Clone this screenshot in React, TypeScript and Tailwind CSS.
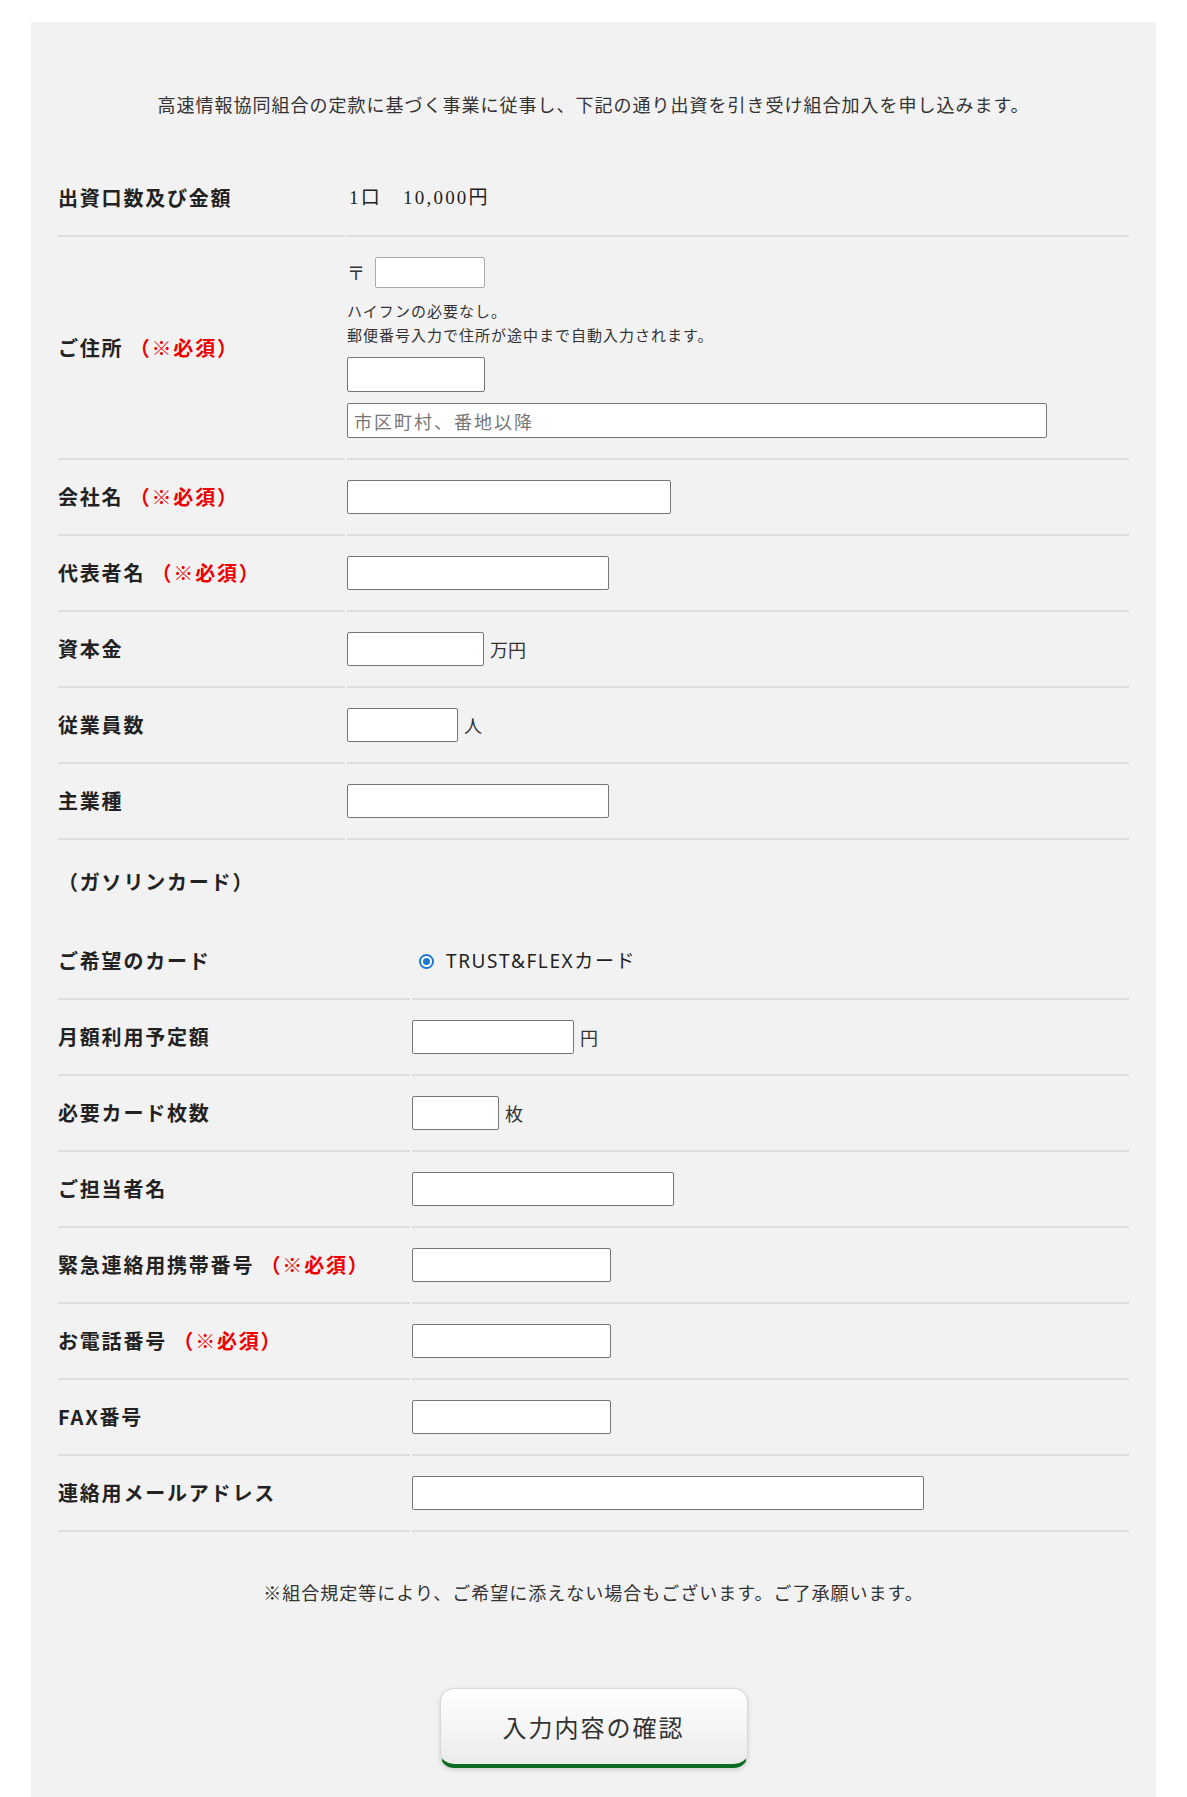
import React from "react";

type Row = {
  label: string;
  required?: boolean;
  width?: number;
  unit?: string;
};

const firstRows: Row[] = [
  { label: "会社名", required: true, width: 324 },
  { label: "代表者名", required: true, width: 262 },
  { label: "資本金", width: 137, unit: "万円" },
  { label: "従業員数", width: 111, unit: "人" },
  { label: "主業種", width: 262 },
];

const secondRows: Row[] = [
  { label: "月額利用予定額", width: 162, unit: "円" },
  { label: "必要カード枚数", width: 87, unit: "枚" },
  { label: "ご担当者名", width: 262 },
  { label: "緊急連絡用携帯番号", required: true, width: 199 },
  { label: "お電話番号", required: true, width: 199 },
  { label: "FAX番号", width: 199 },
  { label: "連絡用メールアドレス", width: 512 },
];

function Label({ label, required }: { label: string; required?: boolean }) {
  return (
    <span className="text-[20px] font-bold leading-[34px] tracking-[1.8px] text-[#222]">
      {label}
      {required && <span className="text-[#ee0000]"> （※必須）</span>}
    </span>
  );
}

function TextInput({ width, light, placeholder }: { width: number; light?: boolean; placeholder?: string }) {
  return (
    <input
      type="text"
      placeholder={placeholder}
      style={{ width }}
      className={
        "h-[34px] rounded-[2px] border bg-white px-[6px] text-[18px] tracking-[1.8px] text-[#333] outline-none placeholder:text-[#777] " +
        (light ? "border-[#aaaaaa]" : "border-[#767676]")
      }
    />
  );
}

function FormRow({ labelWidth, label, required, children }: { labelWidth: number; label: string; required?: boolean; children: React.ReactNode }) {
  return (
    <div className="flex gap-[2px]">
      <div style={{ width: labelWidth }} className="flex shrink-0 items-center border-b-2 border-[#dedede] py-5">
        <Label label={label} required={required} />
      </div>
      <div className="flex flex-1 items-center border-b-2 border-[#dedede] py-5">{children}</div>
    </div>
  );
}

function Unit({ children }: { children: React.ReactNode }) {
  return <span className="ml-[6px] text-[18px] leading-[34px] text-[#333]">{children}</span>;
}

export default function App() {
  return (
    <div className="min-h-screen bg-white pt-[22px] font-['Noto_Sans_CJK_JP',sans-serif] text-[#333]">
      <div className="mx-auto w-[1125px] bg-[#f2f2f2] px-[27px] pb-[60px] pt-[67px]">
        <p className="text-center text-[18px] leading-[30px] tracking-[1px]">
          高速情報協同組合の定款に基づく事業に従事し、下記の通り出資を引き受け組合加入を申し込みます。
        </p>

        <div className="mt-[42px]">
          <FormRow labelWidth={287} label="出資口数及び金額">
            <span className="pl-[2px] font-['Liberation_Serif','Noto_Sans_CJK_JP',serif] text-[19px] leading-[34px] tracking-[2.2px] text-[#222]">
              1口　10,000円
            </span>
          </FormRow>

          <FormRow labelWidth={287} label="ご住所" required>
            <div className="flex flex-col">
              <div className="flex items-center">
                <span className="mr-[10px] text-[18px] leading-[31px]">〒</span>
                <input type="text" className="h-[31px] w-[110px] rounded-[2px] border border-[#aaaaaa] bg-white outline-none" />
              </div>
              <p className="mt-[11px] text-[15px] leading-[24px] tracking-[1px] text-[#333]">
                ハイフンの必要なし。
                <br />
                郵便番号入力で住所が途中まで自動入力されます。
              </p>
              <input type="text" className="mt-[10px] h-[35px] w-[138px] rounded-[2px] border border-[#767676] bg-white outline-none" />
              <input
                type="text"
                placeholder="市区町村、番地以降"
                className="mt-[11px] h-[35px] w-[700px] rounded-[2px] border border-[#767676] bg-white px-[6px] text-[18px] tracking-[2px] outline-none placeholder:text-[#777]"
              />
            </div>
          </FormRow>

          {firstRows.map((row) => (
            <FormRow key={row.label} labelWidth={287} label={row.label} required={row.required}>
              <TextInput width={row.width ?? 200} />
              {row.unit && <Unit>{row.unit}</Unit>}
            </FormRow>
          ))}
        </div>

        <div className="flex h-[84px] items-center">
          <span className="text-[20px] font-bold tracking-[1.8px] text-[#222]">（ガソリンカード）</span>
        </div>

        <div>
          <FormRow labelWidth={352} label="ご希望のカード">
            <label className="ml-[7px] flex h-[34px] items-center">
              <span className="flex h-[15px] w-[15px] items-center justify-center rounded-full border-2 border-[#1f7ad6] bg-white">
                <span className="h-[7px] w-[7px] rounded-full bg-[#1f7ad6]" />
              </span>
              <span className="ml-[12px] font-['Noto_Sans','Noto_Sans_CJK_JP',sans-serif] text-[19px] tracking-[1.6px] text-[#222]">
                TRUST&amp;FLEXカード
              </span>
            </label>
          </FormRow>

          {secondRows.map((row) => (
            <FormRow key={row.label} labelWidth={352} label={row.label} required={row.required}>
              <TextInput width={row.width ?? 200} />
              {row.unit && <Unit>{row.unit}</Unit>}
            </FormRow>
          ))}
        </div>

        <p className="mt-[45px] text-center text-[18px] leading-[30px] tracking-[1px]">
          ※組合規定等により、ご希望に添えない場合もございます。ご了承願います。
        </p>

        <div className="mt-[81px] flex justify-center">
          <button
            type="button"
            className="h-[80px] w-[308px] rounded-[14px] border border-[#d8d8d8] border-b-[4px] border-b-[#0b6b23] bg-gradient-to-b from-white to-[#ebebeb] text-[24px] tracking-[2px] text-[#333] shadow-[0_2px_5px_rgba(0,0,0,0.15)]"
          >
            入力内容の確認
          </button>
        </div>
      </div>
    </div>
  );
}
